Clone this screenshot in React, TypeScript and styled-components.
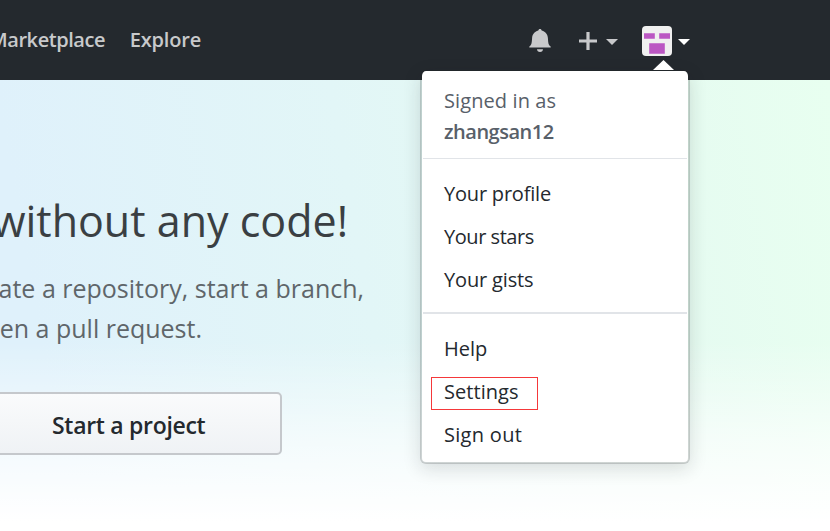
import React from "react";
import styled, { createGlobalStyle } from "styled-components";

const GlobalStyle = createGlobalStyle`
  *, *::before, *::after { box-sizing: border-box; }
  body {
    margin: 0;
    overflow: hidden;
    background: #fff;
    font-family: "Open Sans", "Noto Sans", sans-serif;
    color: #24292e;
  }
`;

const Page = styled.div`
  position: relative;
  width: 830px;
  height: 531px;
  overflow: hidden;
`;

const Header = styled.header`
  display: flex;
  justify-content: space-between;
  height: 80px;
  background: #24292e;
`;

const Nav = styled.nav`
  display: flex;
  gap: 24px;
  margin-left: -13px;
`;

const NavLink = styled.a<{ $width: number; $spacing: number }>`
  display: flex;
  justify-content: flex-end;
  width: ${(p) => p.$width}px;
  white-space: nowrap;
  font-size: 20px;
  font-weight: 600;
  line-height: 80px;
  letter-spacing: ${(p) => p.$spacing}px;
  color: #c8c9cb;
`;

const Actions = styled.div`
  display: flex;
  align-items: flex-start;
  width: 302px;
`;

const Icon = styled.svg<{ $top: number; $left: number }>`
  display: block;
  flex: none;
  margin: ${(p) => p.$top}px 0 0 ${(p) => p.$left}px;
`;

const Hero = styled.main`
  height: 451px;
  padding-top: 110px;
  overflow: hidden;
  background:
    linear-gradient(180deg, rgba(255, 255, 255, 0) 58%, rgba(255, 255, 255, 0.62) 80%, #fff 98%),
    linear-gradient(80deg, #dff1fb 8%, #e2f6f7 45%, #e5faf1 75%, #e8fff0 100%);
`;

const Line = styled.div<{ $right: number; $spacing: number }>`
  display: flex;
  justify-content: flex-end;
  width: ${(p) => p.$right}px;
  white-space: nowrap;
  letter-spacing: ${(p) => p.$spacing}px;
`;

const Title = styled(Line).attrs({ as: "h1" })`
  margin: 0;
  height: 62px;
  font-size: 43px;
  font-weight: 400;
  line-height: 62px;
  color: #3a3f43;
`;

const Lead = styled.div`
  margin-top: 16px;
  font-size: 25px;
  line-height: 40px;
  color: #5f666a;
`;

const StartButton = styled.button`
  display: block;
  width: 290px;
  height: 63px;
  margin: 44px 0 0 -8px;
  padding: 3px 0 0 58px;
  border: 2px solid #c5c8cc;
  border-radius: 5px;
  background: linear-gradient(180deg, #fafbfc, #eff2f5);
  text-align: left;
  white-space: nowrap;
  font: 600 23px "Open Sans", sans-serif;
  letter-spacing: -0.3px;
  color: #24292e;
`;

const Caret = styled.svg`
  position: absolute;
  top: 60px;
  left: 653px;
`;

const Menu = styled.div`
  position: absolute;
  top: 70px;
  left: 420px;
  width: 270px;
  height: 394px;
  border: 2px solid rgba(27, 31, 35, 0.18);
  border-top-width: 1px;
  border-radius: 6px;
  background: #fff;
  background-clip: padding-box;
  box-shadow: 0 5px 18px rgba(27, 31, 35, 0.14);
`;

const Account = styled.div`
  height: 88px;
  margin: 0 1px;
  padding: 14px 0 0 21px;
  border-bottom: 1px solid #e1e4e8;
  font-size: 20px;
  line-height: 31px;
  color: #586069;
`;

const Group = styled.div<{ $divided?: boolean }>`
  margin: 0 1px;
  padding: ${(p) => (p.$divided ? "15px 0 4px" : "15px 0 0")};
  border-bottom: ${(p) => (p.$divided ? "2px solid #e1e4e8" : "none")};
`;

const MenuText = styled.div<{ $spacing: number; $bold?: boolean }>`
  white-space: nowrap;
  font-weight: ${(p) => (p.$bold ? 600 : 400)};
  letter-spacing: ${(p) => p.$spacing}px;
`;

const MenuItem = styled(MenuText)<{ $outlined?: boolean }>`
  width: 107px;
  height: 33px;
  margin: 5px 0 10px 8px;
  padding-left: 12px;
  border: 1px solid ${(p) => (p.$outlined ? "#f5383a" : "transparent")};
  font-size: 20px;
  line-height: 27px;
`;

const BellIcon = () => (
  <Icon $top={28} $left={1} width="22" height="25" viewBox="0 0 22 25" fill="#c8c9cb">
    <path d="M11 1c-1 0-1.500.7-1.700 1.500C5.200 3.700 3.300 6.600 3.100 10c-.3 5.300-.6 7-2.800 8.500v1h21.400v-1c-2.200-1.500-2.500-3.200-2.800-8.500-.2-3.400-2.100-6.300-6.200-7.500C12.500 1.700 12 1 11 1z" />
    <path d="M8 21.200h6c0 1.600-1.200 2.700-3 2.700s-3-1.100-3-2.700z" />
  </Icon>
);

const DownIcon = ({ top, left, color }: { top: number; left: number; color: string }) => (
  <Icon $top={top} $left={left} width="12" height="6" viewBox="0 0 12 6" fill={color}>
    <path d="M0 0h12L6 6z" />
  </Icon>
);

const personal = [
  { label: "Your profile", spacing: -0.2 },
  { label: "Your stars", spacing: -0.45 },
  { label: "Your gists", spacing: -0.15 },
];

const general = [
  { label: "Help", spacing: 0 },
  { label: "Settings", spacing: 0.05, outlined: true },
  { label: "Sign out", spacing: 0.3 },
];

export default function App() {
  return (
    <Page>
      <GlobalStyle />
      <Header>
        <Nav>
          <NavLink $width={118} $spacing={-0.45}>Marketplace</NavLink>
          <NavLink $width={72} $spacing={-0.2}>Explore</NavLink>
        </Nav>
        <Actions>
          <BellIcon />
          <Icon $top={32} $left={28} width="18" height="18" viewBox="0 0 18 18" fill="#c8c9cb">
            <path d="M7.400 0h3.200v7.400H18v3.200h-7.400V18H7.400v-7.400H0V7.400h7.400z" />
          </Icon>
          <DownIcon top={39} left={9} color="#c8c9cb" />
          <Icon $top={26} $left={24} width="30" height="30" viewBox="0 0 30 30">
            <rect width="30" height="30" rx="4" fill="#f0f0f0" />
            <path fill="#bb57c3" d="M2 7.200h10.800v5.600H2zM17.200 7.200H28v5.600H17.200zM7.200 17.200h15.600v10.600H7.200z" />
          </Icon>
          <DownIcon top={39} left={6} color="#fff" />
        </Actions>
      </Header>
      <Hero>
        <Title $right={348} $spacing={0}>without any code!</Title>
        <Lead>
          <Line $right={364} $spacing={0}>ate a repository, start a branch,</Line>
          <Line $right={202} $spacing={0}>en a pull request.</Line>
        </Lead>
        <StartButton>Start a project</StartButton>
      </Hero>
      <Menu>
        <Account>
          <MenuText $spacing={0.1}>Signed in as</MenuText>
          <MenuText $spacing={-0.5} $bold>zhangsan12</MenuText>
        </Account>
        <Group $divided>
          {personal.map((item) => (
            <MenuItem key={item.label} $spacing={item.spacing}>{item.label}</MenuItem>
          ))}
        </Group>
        <Group>
          {general.map((item) => (
            <MenuItem key={item.label} $spacing={item.spacing} $outlined={item.outlined}>
              {item.label}
            </MenuItem>
          ))}
        </Group>
      </Menu>
      <Caret width="21" height="10" viewBox="0 0 21 10" fill="#fff">
        <path d="M10.500 0L21 10H0z" />
      </Caret>
    </Page>
  );
}
